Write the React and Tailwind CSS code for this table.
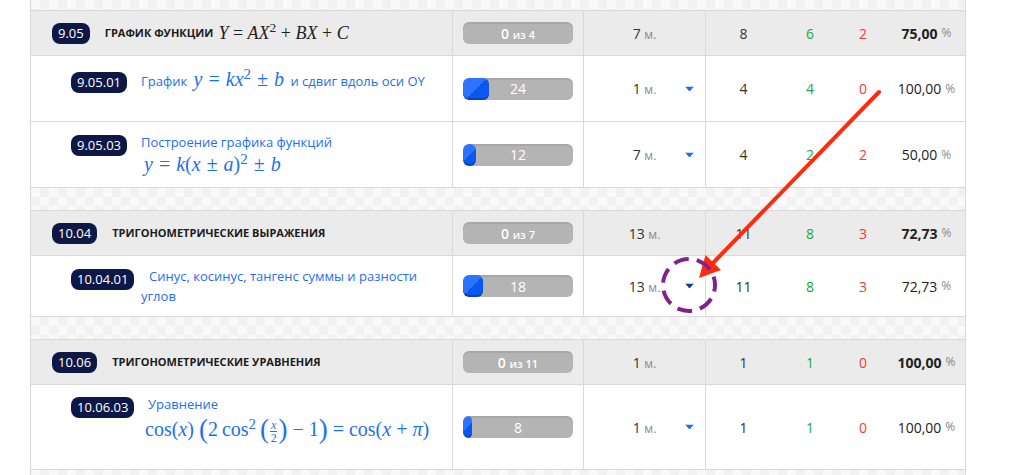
import React from "react";

const GRID =
  "grid grid-cols-[422px_131px_122px_75px_58px_48px_79px] border-b border-[#d9d9d9]";
const CHECK =
  "bg-[image:repeating-conic-gradient(#f1f1f1_0%_25%,#f9f9f9_0%_50%)] bg-[length:18px_18px]";

function Badge({ children }) {
  return (
    <span className="inline-flex h-[21px] items-center rounded-[8px] bg-[#0e1846] px-[6px] text-[13px] font-medium leading-none text-white">
      {children}
    </span>
  );
}

function Pill({ fill, value, total }) {
  return (
    <div className="relative h-[22px] w-[110px] overflow-hidden rounded-[6px] bg-[#b4b4b4] shadow-[inset_0_2px_0_rgba(0,0,0,0.07)]">
      {fill ? (
        <div
          className="absolute left-0 top-0 h-full rounded-[6px] bg-[linear-gradient(135deg,#2c74ff_50%,#0b58f0_50%)] shadow-[inset_0_-2px_0_rgba(0,20,90,0.3)]"
          style={{ width: fill }}
        />
      ) : null}
      <div className="relative flex h-full items-center justify-center text-white">
        {total ? (
          <span className="text-[14px] font-semibold">
            0 <span className="text-[11px]">из {total}</span>
          </span>
        ) : (
          <span className="text-[14px]">{value}</span>
        )}
      </div>
    </div>
  );
}

function Caret({ dark }) {
  return (
    <svg
      className="absolute right-[11px] top-1/2 -translate-y-1/2"
      width="9"
      height="5"
      viewBox="0 0 9 5"
    >
      <path d="M0 0 L9 0 L4.5 5 Z" fill={dark ? "#1b3a8f" : "#1d6ff2"} />
    </svg>
  );
}

function Stats({ n, g, r, pct, bold }) {
  return (
    <>
      <div className="flex items-center justify-center text-[14px] text-[#333]">{n}</div>
      <div className="flex items-center justify-center text-[14px] text-[#17a84a]">{g}</div>
      <div className="flex items-center justify-center text-[14px] text-[#f43a36]">{r}</div>
      <div className="flex items-center justify-center text-[14px] text-[#222]">
        <span className={bold ? "font-bold" : ""}>{pct}</span>
        <span className="ml-[4px] text-[12px] text-[#8a8a8a]">%</span>
      </div>
    </>
  );
}

function Time({ v, caret, dark }) {
  return (
    <div className="relative flex items-center justify-center border-r border-[#d9d9d9] text-[14px] text-[#333]">
      <span>
        {v} <span className="text-[12px] text-[#8a8a8a]">м.</span>
      </span>
      {caret ? <Caret dark={dark} /> : null}
    </div>
  );
}

function HeaderRow({ code, title, math, total, time, n, g, r, pct }) {
  return (
    <div className={`${GRID} h-[45px] bg-[#ebebeb]`}>
      <div className="flex items-center gap-[15px] border-r border-[#d9d9d9] pl-[21px]">
        <Badge>{code}</Badge>
        <span className="flex items-center gap-[5px]">
          <span className="text-[11px] font-bold uppercase text-[#1c1c1c]">{title}</span>
          {math}
        </span>
      </div>
      <div className="flex items-center justify-center border-r border-[#d9d9d9]">
        <Pill total={total} />
      </div>
      <Time v={time} />
      <Stats n={n} g={g} r={r} pct={pct} bold />
    </div>
  );
}

function SubRow({ h, pt, code, children, fill, value, time, dark, n, g, r, pct }) {
  return (
    <div className={`${GRID} bg-white`} style={{ height: h }}>
      <div className="flex items-start border-r border-[#d9d9d9] pl-[40px]" style={{ paddingTop: pt }}>
        <div className="w-[70px] shrink-0">
          <Badge>{code}</Badge>
        </div>
        <div className="text-[13px] leading-[20px] text-[#1d6ff2]">{children}</div>
      </div>
      <div className="flex items-center justify-center border-r border-[#d9d9d9]">
        <Pill fill={fill} value={value} />
      </div>
      <Time v={time} caret dark={dark} />
      <Stats n={n} g={g} r={r} pct={pct} />
    </div>
  );
}

const M = "font-['Liberation_Serif',serif]";

function Op({ children }) {
  return <span className="mx-[6px]">{children}</span>;
}

function Sep({ h = 23 }) {
  return <div className={`${CHECK} border-b border-[#d9d9d9]`} style={{ height: h }} />;
}

export default function App() {
  return (
    <div className="relative h-[475px] w-[1013px] overflow-hidden bg-white font-['Open_Sans',sans-serif]">
      <div className="ml-[30px] w-[936px] border-x border-[#d9d9d9]">
        <Sep h={11} />
        <HeaderRow
          code="9.05"
          title="График функции"
          math={
            <span className={`${M} text-[18px] text-[#222]`}>
              <i>Y</i> = <i>AX</i>
              <sup>2</sup> + <i>BX</i> + <i>C</i>
            </span>
          }
          total={4}
          time={7}
          n={8}
          g={6}
          r={2}
          pct="75,00"
        />
        <SubRow h={66} pt={13} code="9.05.01" fill={26} value={24} time={1} n={4} g={4} r={0} pct="100,00">
          <span>
            График{" "}
            <span className={`${M} mx-[3px] text-[20px]`}>
              <i>y</i>
              <Op>=</Op>
              <i>kx</i>
              <sup>2</sup>
              <Op>±</Op>
              <i>b</i>
            </span>{" "}
            и сдвиг вдоль оси OY
          </span>
        </SubRow>
        <SubRow h={66} pt={10} code="9.05.03" fill={13} value={12} time={7} n={4} g={2} r={2} pct="50,00">
          <div>Построение графика функций</div>
          <div className={`${M} ml-[3px] text-[20px] leading-[24px]`}>
            <i>y</i>
            <Op>=</Op>
            <i>k</i>(<i>x</i>
            <Op>±</Op>
            <i>a</i>)<sup>2</sup>
            <Op>±</Op>
            <i>b</i>
          </div>
        </SubRow>
        <Sep />
        <HeaderRow
          code="10.04"
          title="Тригонометрические выражения"
          total={7}
          time={13}
          n={11}
          g={8}
          r={3}
          pct="72,73"
        />
        <SubRow h={61} pt={10} code="10.04.01" fill={20} value={18} time={13} dark n={11} g={8} r={3} pct="72,73">
          <div className="w-[280px] indent-[8px]">Синус, косинус, тангенс суммы и разности углов</div>
        </SubRow>
        <Sep />
        <HeaderRow
          code="10.06"
          title="Тригонометрические уравнения"
          total={11}
          time={1}
          n={1}
          g={1}
          r={0}
          pct="100,00"
        />
        <SubRow h={85} pt={9} code="10.06.03" fill={9} value={8} time={1} n={1} g={1} r={0} pct="100,00">
          <div className="pl-[7px]">Уравнение</div>
          <div className={`${M} ml-[4px] whitespace-nowrap text-[20px] leading-[30px]`}>
            cos(<i>x</i>)<span className="ml-[5px] inline-block align-[-2px] text-[27px] leading-none">(</span>2&thinsp;cos<sup>2</sup>
            <span className="ml-[4px] inline-block align-[-2px] text-[27px] leading-none">(</span>
            <span className="mx-[1px] inline-flex flex-col items-center align-middle text-[12px] leading-[12px]">
              <i className="border-b border-current px-[1px]">x</i>
              <span>2</span>
            </span>
            <span className="inline-block align-[-2px] text-[27px] leading-none">)</span> − 1
            <span className="inline-block align-[-2px] text-[27px] leading-none">)</span> = cos(<i>x</i> + <i>π</i>)
          </div>
        </SubRow>
        <Sep h={10} />
      </div>

      <svg className="pointer-events-none absolute left-0 top-0" width="1013" height="475">
        <line x1="879" y1="92" x2="712" y2="264" stroke="#ff2b0c" strokeWidth="4" strokeLinecap="round" />
        <path d="M699 278 L705.5 255 L721 270 Z" fill="#ff2b0c" />
        <circle
          cx="689"
          cy="285"
          r="26"
          fill="none"
          stroke="#84208b"
          strokeWidth="4"
          strokeDasharray="15 8"
          transform="rotate(-70 689 285)"
        />
      </svg>
    </div>
  );
}
